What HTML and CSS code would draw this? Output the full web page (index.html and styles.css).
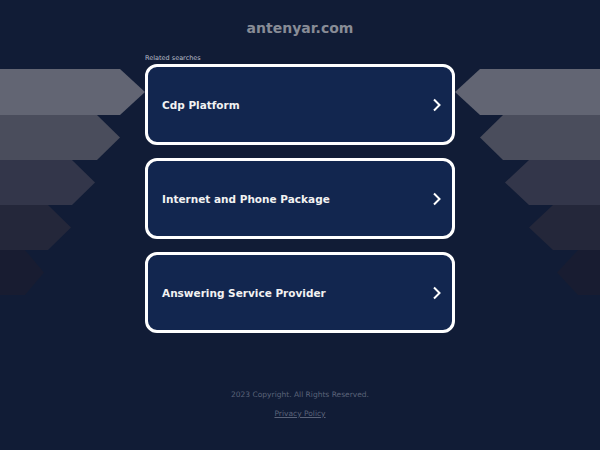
FILE: index.html
```html
<!DOCTYPE html>
<html>
<head>
<meta charset="utf-8">
<link rel="stylesheet" href="styles.css">
</head>
<body>
<svg class="deco" width="600" height="450" viewBox="0 0 600 450" aria-hidden="true">
  <polygon points="0,69 120,69 145,92 120,115 0,115" fill="#626573"/>
  <polygon points="0,115 97,115 120,137.5 97,160 0,160" fill="#4a4d5c"/>
  <polygon points="0,160 72,160 95,182.5 72,205 0,205" fill="#33364a"/>
  <polygon points="0,205 48,205 71,227.5 48,250 0,250" fill="#24273a"/>
  <polygon points="0,250 25,250 44,272.5 25,295 0,295" fill="#181c31"/>
  <polygon points="600,69 480,69 455,92 480,115 600,115" fill="#626573"/>
  <polygon points="600,115 503,115 480,137.5 503,160 600,160" fill="#4a4d5c"/>
  <polygon points="600,160 529,160 505,182.5 529,205 600,205" fill="#33364a"/>
  <polygon points="600,205 553,205 529,227.5 553,250 600,250" fill="#24273a"/>
  <polygon points="600,250 578,250 557,272.5 578,295 600,295" fill="#181c31"/>
</svg>
<div class="page">
  <header class="domain">antenyar.com</header>
  <main class="results">
    <div class="label">Related searches</div>
    <a class="card" href="#"><span class="card-text">Cdp Platform</span><svg class="chev" width="10" height="14" viewBox="0 0 10 14"><path d="M2 1.5 L7.5 7 L2 12.5" fill="none" stroke="#fff" stroke-width="2"/></svg></a>
    <a class="card" href="#"><span class="card-text">Internet and Phone Package</span><svg class="chev" width="10" height="14" viewBox="0 0 10 14"><path d="M2 1.5 L7.5 7 L2 12.5" fill="none" stroke="#fff" stroke-width="2"/></svg></a>
    <a class="card" href="#"><span class="card-text">Answering Service Provider</span><svg class="chev" width="10" height="14" viewBox="0 0 10 14"><path d="M2 1.5 L7.5 7 L2 12.5" fill="none" stroke="#fff" stroke-width="2"/></svg></a>
  </main>
  <footer class="footer">
    <div class="copy">2023 Copyright. All Rights Reserved.</div>
    <a class="privacy" href="#">Privacy Policy</a>
  </footer>
</div>
</body>
</html>
```
FILE: styles.css
```css
html, body {
  margin: 0;
  padding: 0;
  background: #111c36;
  width: 600px;
  height: 450px;
  overflow: hidden;
  font-family: "DejaVu Sans", sans-serif;
}
.deco {
  position: absolute;
  left: 0;
  top: 0;
}
.page {
  position: relative;
  display: flex;
  flex-direction: column;
  align-items: center;
}
.domain {
  margin-top: 19px;
  height: 18px;
  line-height: 18px;
  font-size: 14px;
  font-weight: bold;
  color: #888c96;
}
.results {
  margin-top: 17px;
  width: 310px;
  display: flex;
  flex-direction: column;
}
.label {
  font-size: 6.5px;
  color: #b8bcc8;
  line-height: 8px;
  height: 8px;
  margin-bottom: 2px;
}
.card {
  box-sizing: border-box;
  height: 81px;
  border: 3px solid #ffffff;
  border-radius: 12px;
  background: #12264f;
  display: flex;
  align-items: center;
  justify-content: space-between;
  padding: 0 10px 0 14px;
  text-decoration: none;
  margin-bottom: 13px;
}
.card-text {
  color: #f2f2f2;
  font-size: 10.5px;
  font-weight: bold;
}
.chev {
  display: block;
}
.footer {
  margin-top: 44px;
  display: flex;
  flex-direction: column;
  align-items: center;
  font-size: 7.5px;
  color: #5b6379;
}
.copy {
  line-height: 10px;
}
.privacy {
  margin-top: 9px;
  color: #5b6379;
  line-height: 10px;
}
```
